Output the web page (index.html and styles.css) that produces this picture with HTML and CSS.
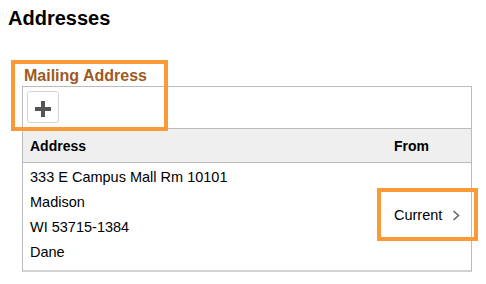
FILE: index.html
```html
<!DOCTYPE html>
<html lang="en">
<head>
  <meta charset="UTF-8" />
  <meta name="viewport" content="width=device-width, initial-scale=1.0"/>
  <title>Addresses</title>
  <link rel="stylesheet" href="styles.css">
</head>
<body>
  <div class="page">
    <h1>Addresses</h1>

    <h2 class="group-title">Mailing Address</h2>
    <div class="panel">
      <div class="toolbar">
        <button class="add-btn" type="button" aria-label="Add">
          <svg width="16" height="16" viewBox="0 0 16 16">
            <path d="M8 0v16M0 8h16" stroke="#555" stroke-width="4"/>
          </svg>
        </button>
      </div>
      <table class="grid">
        <thead>
          <tr>
            <th class="col-addr">Address</th>
            <th class="col-from">From</th>
          </tr>
        </thead>
        <tbody>
          <tr>
            <td class="col-addr">
              <div>333 E Campus Mall Rm 10101</div>
              <div>Madison</div>
              <div>WI 53715-1384</div>
              <div>Dane</div>
            </td>
            <td class="col-from">
              <span class="current">Current
                <svg class="chevron" width="8" height="11" viewBox="0 0 8 11">
                  <path d="M1.5 1l5 4.5-5 4.5" fill="none" stroke="#666" stroke-width="1.6"/>
                </svg>
              </span>
            </td>
          </tr>
        </tbody>
      </table>
    </div>

    <div class="mark mark-title"></div>
    <div class="mark mark-current"></div>
  </div>
</body>
</html>
```

FILE: styles.css
```css
* { box-sizing: border-box; margin: 0; padding: 0; }
body { font-family: "Liberation Sans", Arial, sans-serif; color: #000; background: #fff; }

.page {
  position: relative;
  padding: 6px 8px;
}

h1 {
  font-size: 20px;
  line-height: 24px;
  font-weight: bold;
}

.group-title {
  margin: 36px 0 0 16px;
  font-size: 16px;
  line-height: 20px;
  font-weight: bold;
  color: #9e5a1f;
}

.panel {
  margin-left: 14px;
  width: 450px;
  border: 1px solid #bbb;
  border-bottom: 2px solid #d2d2d2;
}

.toolbar {
  padding: 4px 4px 5px;
}

.add-btn {
  width: 32px;
  height: 32px;
  display: flex;
  align-items: center;
  justify-content: center;
  padding-top: 4px;
  background: #fff;
  border: 1px solid #d4d4d4;
  border-radius: 3px;
}

.grid {
  width: 100%;
  border-collapse: collapse;
}

.grid th {
  background: #efefef;
  border-top: 1px solid #bbb;
  border-bottom: 1px solid #bbb;
  height: 34px;
  font-size: 14px;
  text-align: left;
  padding: 0 7px;
}

.grid td {
  font-size: 14.5px;
  line-height: 25px;
  padding: 2px 7px 5px;
  vertical-align: middle;
}

.col-from { width: 84px; }

.current {
  display: flex;
  align-items: center;
  gap: 10px;
}

.chevron { display: block; }

.mark {
  position: absolute;
  border: 4px solid #fb9a36;
}

.mark-title {
  left: 11px;
  top: 60px;
  width: 157px;
  height: 71px;
}

.mark-current {
  left: 377px;
  top: 188px;
  width: 101px;
  height: 53px;
}
```
